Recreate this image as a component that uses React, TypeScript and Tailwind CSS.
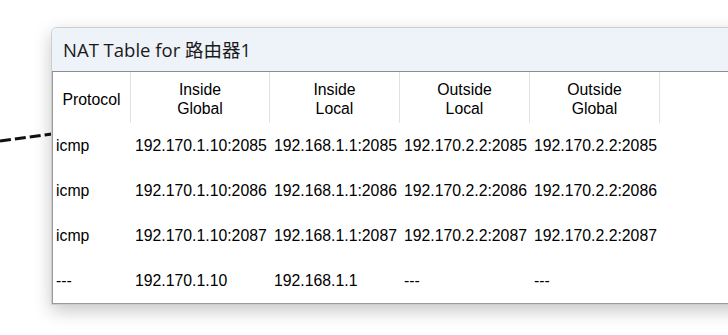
import React from 'react';

const font = { fontFamily: '"Liberation Sans", Arial, "Noto Sans CJK SC", sans-serif' };

const rows = [
  ['icmp', '192.170.1.10:2085', '192.168.1.1:2085', '192.170.2.2:2085', '192.170.2.2:2085'],
  ['icmp', '192.170.1.10:2086', '192.168.1.1:2086', '192.170.2.2:2086', '192.170.2.2:2086'],
  ['icmp', '192.170.1.10:2087', '192.168.1.1:2087', '192.170.2.2:2087', '192.170.2.2:2087'],
  ['---', '192.170.1.10', '192.168.1.1', '---', '---'],
];

const headers = [['Protocol'], ['Inside', 'Global'], ['Inside', 'Local'], ['Outside', 'Local'], ['Outside', 'Global']];

const App = () => {
  return (
    <div className="relative w-[728px] h-[335px] overflow-hidden bg-white" style={font}>
      {/* link line behind the window */}
      <svg className="absolute left-0 top-0" width="60" height="160">
        <line x1="0" y1="141" x2="52" y2="134" stroke="#111" strokeWidth="3.2" strokeDasharray="11 4" />
      </svg>

      {/* NAT window */}
      <div className="relative ml-[51px] mt-[27px] w-[720px] border border-[#cdcdcd] rounded-t-[6px] bg-white shadow-[0_6px_18px_rgba(0,0,0,0.22)]">
        <div className="h-[44px] flex items-center pl-[11px] bg-[#eef2f9] rounded-t-[6px] border-b border-[#8c8c8c]">
          <span className="text-[18.5px] text-[#1a1a1a]" style={{ fontFamily: '"Open Sans", "Noto Sans CJK SC", sans-serif' }}>
            NAT Table for 路由器1
          </span>
        </div>

        <div className="border-l border-b border-[#9a9a9a] text-[15.8px] text-black">
          <div className="grid grid-cols-[78px_139px_130px_130px_130px_1fr] h-[51px]">
            {headers.map((h, i) => (
              <div key={i} className="flex flex-col items-center justify-center pt-[3px] leading-[19px] border-r border-[#e2e2e2]">
                {h.map((line) => (
                  <span key={line}>{line}</span>
                ))}
              </div>
            ))}
            <div />
          </div>

          {rows.map((r, i) => (
            <div key={i} className="grid grid-cols-[78px_139px_130px_130px_130px_1fr] h-[45px] items-center">
              {r.map((c, j) => (
                <div key={j} className={j === 0 ? 'pl-[3px] whitespace-nowrap' : 'pl-[4px] whitespace-nowrap'}>
                  {c}
                </div>
              ))}
              <div />
            </div>
          ))}
        </div>
      </div>
    </div>
  );
};

export default App;
